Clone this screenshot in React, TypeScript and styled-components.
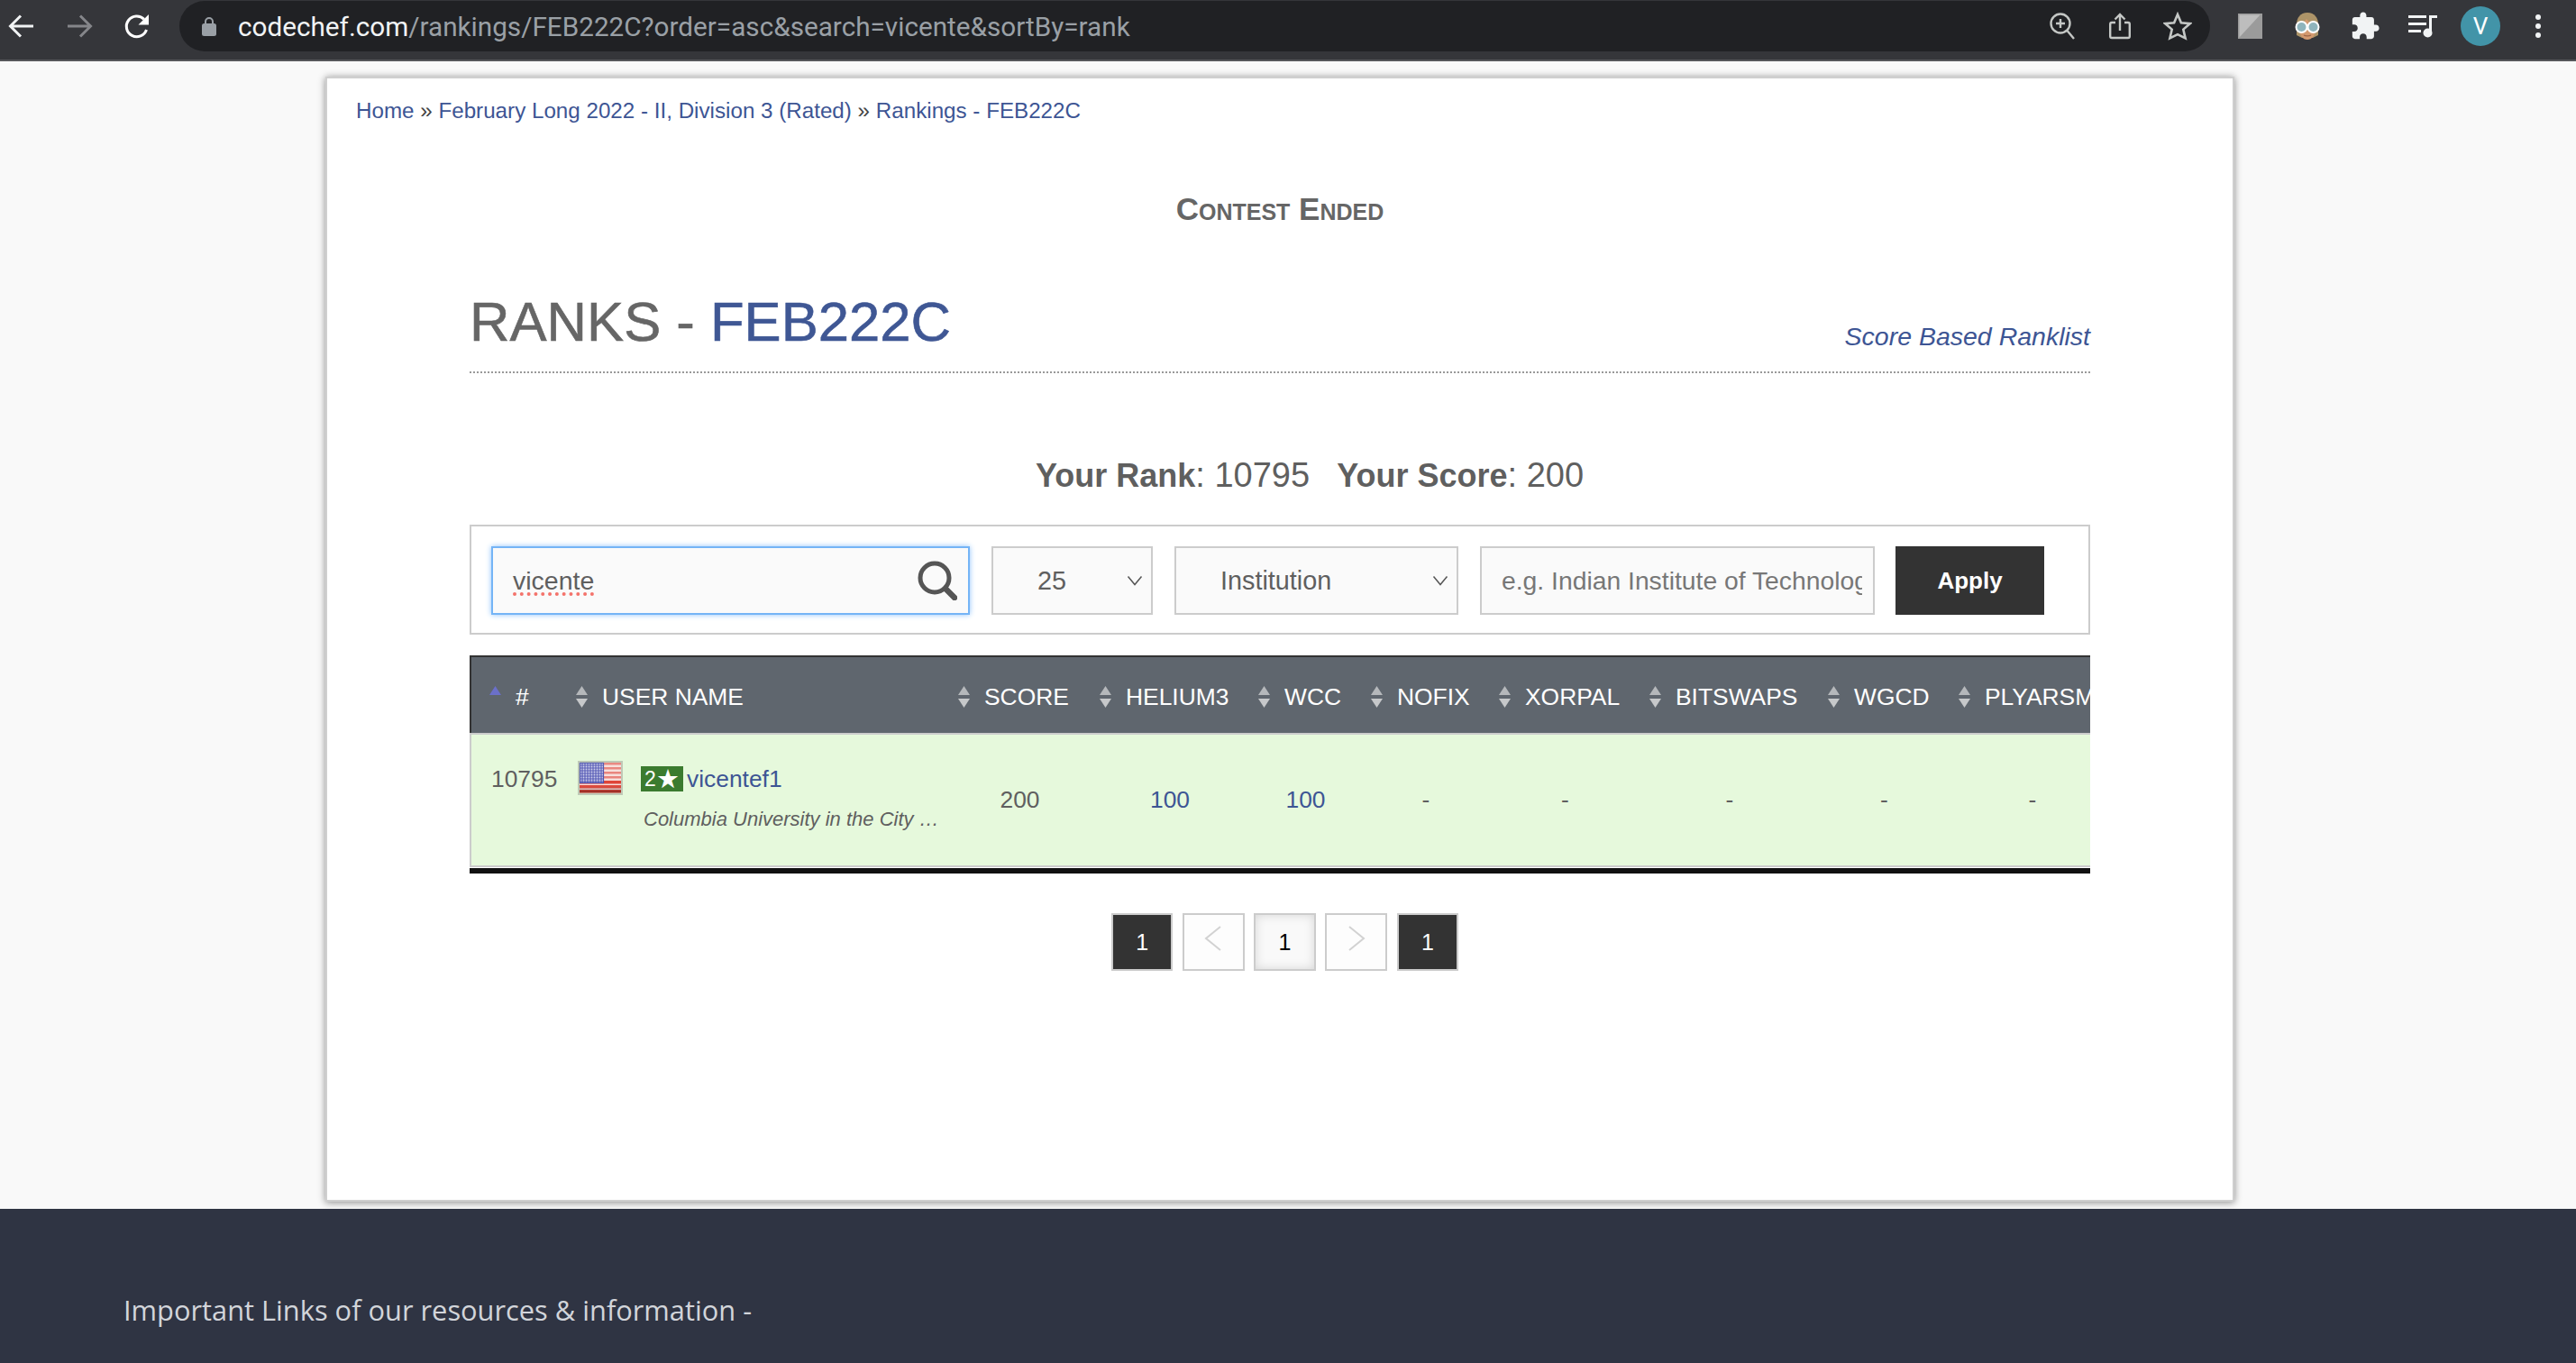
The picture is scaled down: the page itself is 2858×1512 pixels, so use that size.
import * as React from 'react';
import styled, { createGlobalStyle } from 'styled-components';

const GlobalStyle = createGlobalStyle`
  html, body {
    margin: 0;
    padding: 0;
    height: 100%;
    overflow: hidden;
    background: #f9f9f9;
  }
  * {
    box-sizing: border-box;
  }
`;

const sans = `"Liberation Sans", Arial, sans-serif`;
const linkBlue = '#3d5594';
const textGrey = '#5f5f5f';

const columnTemplate = '112px 424px 157px 176px 125px 142px 167px 198px 145px 184px';

const Page = styled.div`
  display: flex;
  flex-direction: column;
  width: 2858px;
  height: 1512px;
  overflow: hidden;
  font-family: ${sans};
`;

/* browser toolbar */
const Toolbar = styled.div`
  display: flex;
  align-items: center;
  flex: none;
  height: 68px;
  padding: 2px 20px 10px 6px;
  background: #35363a;
  border-bottom: 2px solid #55565a;
`;

const ToolButton = styled.div`
  display: flex;
  align-items: center;
  justify-content: center;
  flex: none;
  width: 36px;
  height: 36px;
`;

const NavGroup = styled.div`
  display: flex;
  gap: 28px;
  margin-right: 29px;
`;

const Omnibox = styled.div`
  display: flex;
  align-items: center;
  flex: 1;
  height: 56px;
  padding: 0 18px 0 25px;
  border-radius: 28px;
  background: #202124;
`;

const Url = styled.div`
  flex: 1;
  margin-left: 24px;
  font-family: Roboto, ${sans};
  font-size: 29.7px;
  color: #9aa0a6;
  white-space: nowrap;
`;

const Domain = styled.span`
  color: #f1f3f4;
`;

const OmniActions = styled.div`
  display: flex;
  gap: 28px;
`;

const ExtensionGroup = styled.div`
  display: flex;
  gap: 20px;
  margin-left: 22px;
`;

const ExtensionSlot = styled.div`
  display: flex;
  align-items: center;
  justify-content: center;
  width: 44px;
  height: 44px;
`;

const ProfileBadge = styled(ExtensionSlot)`
  border-radius: 50%;
  background: #4294a8;
  color: #fff;
  font-family: Roboto, ${sans};
  font-size: 26px;
`;

/* page body */
const Main = styled.div`
  display: flex;
  justify-content: center;
  flex: none;
  height: 1273px;
  padding: 17px 18px 0 0;
  background: #f9f9f9;
`;

const Card = styled.div`
  width: 2118px;
  height: 1248px;
  padding: 20px 32px 0;
  background: #fff;
  border: 2px solid #cfcfcf;
  box-shadow: 0 1px 8px rgba(0, 0, 0, 0.45);
`;

const Breadcrumb = styled.div`
  font-size: 24.2px;
  line-height: 31px;
  color: #444;
`;

const Crumb = styled.a`
  color: ${linkBlue};
  text-decoration: none;
`;

const Inner = styled.div`
  width: 1798px;
  margin: 0 auto;
`;

const Notice = styled.div`
  margin-top: 79px;
  font-size: 35px;
  line-height: 30px;
  font-weight: bold;
  font-variant: small-caps;
  text-align: center;
  color: #666;
`;

const TitleRow = styled.div`
  display: flex;
  align-items: flex-end;
  justify-content: space-between;
  height: 96px;
  margin-top: 71px;
  padding-bottom: 15px;
  border-bottom: 2px dotted #999;
`;

const Title = styled.h1`
  margin: 0 0 4px;
  font-size: 61.6px;
  line-height: 72px;
  font-weight: normal;
  color: #666;
  -webkit-text-stroke: 0.6px currentColor;
`;

const TitleCode = styled.span`
  color: #3f5794;
`;

const RanklistLink = styled.a`
  margin-bottom: 7px;
  font-size: 28.5px;
  line-height: 34px;
  font-style: italic;
  color: ${linkBlue};
`;

const Summary = styled.div`
  margin-top: 90px;
  padding-left: 66px;
  font-size: 38px;
  line-height: 46px;
  text-align: center;
  color: ${textGrey};
`;

const SummaryLabel = styled.b`
  margin-left: 30px;
  font-size: 36px;
  &:first-child {
    margin-left: 0;
  }
`;

const FilterBox = styled.div`
  display: flex;
  gap: 24px;
  height: 122px;
  margin-top: 31px;
  padding: 22px;
  border: 2px solid #ccc;
`;

const SearchField = styled.div`
  display: flex;
  align-items: center;
  justify-content: space-between;
  width: 531px;
  height: 76px;
  padding: 0 12px 0 22px;
  background: #fafafa;
  border: 2px solid #74b4f6;
  box-shadow: 0 0 6px #8dc2fb;
  font-size: 28.5px;
  color: ${textGrey};
`;

const Misspelt = styled.span`
  text-decoration: underline dotted #f4736b 4px;
  text-underline-offset: 4px;
`;

const SelectBox = styled.div<{ $width: number }>`
  display: flex;
  align-items: center;
  justify-content: space-between;
  width: ${(p) => p.$width}px;
  height: 76px;
  padding: 0 9px 0 49px;
  background: #fafafa;
  border: 2px solid #ccc;
  font-size: 28.8px;
  color: ${textGrey};
`;

const InstitutionInput = styled.input`
  width: 438px;
  height: 76px;
  padding: 0 12px 0 22px;
  background: #fafafa;
  border: 2px solid #ccc;
  border-radius: 0;
  outline: none;
  font-family: ${sans};
  font-size: 28.3px;
  &::placeholder {
    color: #777;
    opacity: 1;
  }
`;

const ApplyButton = styled.button`
  width: 165px;
  height: 76px;
  margin-left: -1px;
  padding: 0;
  background: #333;
  border: 0;
  font-family: ${sans};
  font-size: 26px;
  font-weight: bold;
  color: #fff;
`;

/* rankings table */
const Table = styled.div`
  margin-top: 23px;
  overflow: hidden;
  border-bottom: 6px solid #111;
`;

const HeaderRow = styled.div`
  display: grid;
  grid-template-columns: ${columnTemplate};
  align-items: center;
  width: 1830px;
  height: 88px;
  background: #5f666e;
  border-top: 2px solid #333;
  border-bottom: 2px solid #ccc;
  box-shadow: inset 2px 0 0 #333;
`;

const HeaderCell = styled.div<{ $first?: boolean }>`
  display: flex;
  align-items: center;
  gap: 16px;
  padding: 4px 0 0 ${(p) => (p.$first ? 22 : 6)}px;
  font-size: 26.4px;
  color: #fff;
  white-space: nowrap;
`;

const BodyRow = styled.div`
  display: grid;
  grid-template-columns: ${columnTemplate};
  align-items: center;
  width: 1830px;
  height: 147px;
  margin-bottom: 1px;
  background: #e6f9dc;
  border-bottom: 2px solid #ccc;
  box-shadow: inset 2px 0 0 #ccc;
  font-size: 26.4px;
  color: ${textGrey};
`;

const RankCell = styled.div`
  align-self: start;
  padding: 34px 0 0 24px;
  line-height: 30px;
`;

const UserCell = styled.div`
  display: flex;
  align-self: start;
  gap: 19px;
  padding: 28px 0 0 7px;
`;

const FlagWrap = styled.div`
  flex: none;
  width: 52px;
  height: 40px;
`;

const UserStack = styled.div`
  padding-top: 6px;
`;

const UserLine = styled.div`
  display: flex;
  align-items: center;
  gap: 4px;
  height: 30px;
`;

const RatingBadge = styled.span`
  display: flex;
  align-items: center;
  justify-content: center;
  width: 47px;
  height: 28px;
  background: #3b7b2f;
  font-size: 23px;
  line-height: 28px;
  color: #fff;
`;

const RatingStar = styled.span`
  font-family: "DejaVu Sans", ${sans};
  font-size: 29px;
  line-height: 28px;
`;

const UserLink = styled.a`
  color: ${linkBlue};
`;

const Institution = styled.div`
  margin-top: 15px;
  margin-left: 3px;
  font-size: 22px;
  line-height: 30px;
  font-style: italic;
  white-space: nowrap;
`;

const ScoreCell = styled.div<{ $link?: boolean }>`
  padding-right: 8px;
  text-align: center;
  color: ${(p) => (p.$link ? linkBlue : textGrey)};
`;

/* pager */
const Pager = styled.div`
  display: flex;
  justify-content: center;
  gap: 10.6px;
  margin-top: 44px;
  padding-left: 11px;
`;

const PageButton = styled.div<{ $kind: 'edge' | 'arrow' | 'current' }>`
  display: flex;
  align-items: center;
  justify-content: center;
  width: 68.6px;
  height: 64px;
  padding-bottom: ${(p) => (p.$kind === 'arrow' ? 8 : 0)}px;
  border: 2px solid #ccc;
  font-size: 25px;
  background: ${(p) => (p.$kind === 'edge' ? '#333' : p.$kind === 'arrow' ? '#fdfdfd' : '#f9f9f9')};
  color: ${(p) => (p.$kind === 'edge' ? '#fff' : '#000')};
  box-shadow: ${(p) => (p.$kind === 'current' ? 'inset 0 0 12px rgba(0, 0, 0, 0.14)' : 'none')};
`;

const Footer = styled.div`
  flex: 1;
  padding: 94px 0 0 137px;
  background: #2f3443;
  font-family: "Open Sans", ${sans};
  font-size: 30.8px;
  line-height: 36px;
  color: #d2d5da;
`;

const BackIcon = ({ color }: { color: string }) => (
  <svg width="30" height="30" viewBox="0 0 30 30" fill="none" stroke={color} strokeWidth="3">
    <path d="M28 15H3M14 3.5 2.5 15 14 26.5" />
  </svg>
);

const ForwardIcon = () => (
  <svg width="30" height="30" viewBox="0 0 30 30" fill="none" stroke="#85868a" strokeWidth="3">
    <path d="M2 15h25M16 3.5 27.5 15 16 26.5" />
  </svg>
);

const ReloadIcon = () => (
  <svg width="30" height="30" viewBox="0 0 30 30">
    <path d="M25.5 19a11.4 11.4 0 1 1-2.6-11.6" fill="none" stroke="#fff" strokeWidth="3" />
    <path d="M28 2v11.5H16.5z" fill="#fff" />
  </svg>
);

const LockIcon = () => (
  <svg width="16" height="22" viewBox="0 0 16 22">
    <path d="M4 9V6a4 4 0 0 1 8 0v3" fill="none" stroke="#9aa0a6" strokeWidth="2" />
    <rect y="8" width="16" height="14" rx="2.5" fill="#9aa0a6" />
  </svg>
);

const ZoomIcon = () => (
  <svg width="28" height="30" viewBox="0 0 28 30" fill="none" stroke="#c4c7c5" strokeWidth="2.4">
    <circle cx="12" cy="12" r="10.5" />
    <path d="M12 7v10M7 12h10M19.5 20 27 29" />
  </svg>
);

const ShareIcon = () => (
  <svg width="24" height="30" viewBox="0 0 24 30" fill="none" stroke="#c4c7c5" strokeWidth="2.4">
    <path d="M7 11H3a1.8 1.8 0 0 0-1.8 1.8v13.4A1.8 1.8 0 0 0 3 28h18a1.8 1.8 0 0 0 1.8-1.8V12.800A1.8 1.8 0 0 0 21 11h-4" />
    <path d="M12 20V2M6.500 7.500 12 2l5.500 5.500" />
  </svg>
);

const StarIcon = () => (
  <svg width="32" height="32" viewBox="0 0 32 32" fill="none" stroke="#c4c7c5" strokeWidth="2.6">
    <path d="m16 3 3.900 9.300 10 .8-7.600 6.500 2.300 9.800L16 25.200 7.400 29.400l2.300-9.800L2.100 13.100l10-.8z" />
  </svg>
);

const GreySquareIcon = () => (
  <svg width="27" height="28" viewBox="0 0 27 28">
    <rect width="27" height="28" fill="#9b9b9b" />
    <path d="M1.500 26.500V1.500h23z" fill="#bdbdbd" />
  </svg>
);

const AvatarIcon = () => (
  <svg width="32" height="32" viewBox="0 0 32 32">
    <path d="M16 1C8 1 4 7 4 14v12l6 3h12l6-3V14c0-7-4-13-12-13z" fill="#ad9468" />
    <path d="M7 15c3-2 6-4 8-7 3 4 6 6 10 7v5c0 6-4 11-9 11S7 26 7 20z" fill="#d3996f" />
    <path d="M12 26c2 1.200 6 1.200 8 0" stroke="#9d6648" strokeWidth="1.400" fill="none" />
    <circle cx="9.500" cy="17" r="6" fill="#8fb4bc" stroke="#fff" strokeWidth="2" />
    <circle cx="22.500" cy="17" r="6" fill="#8fb4bc" stroke="#fff" strokeWidth="2" />
  </svg>
);

const PuzzleIcon = () => (
  <svg width="34" height="34" viewBox="0 0 24 24" fill="#f1f3f4">
    <path d="M20.500 11H19V7c0-1.100-.9-2-2-2h-4V3.500C13 2.120 11.880 1 10.500 1S8 2.120 8 3.500V5H4c-1.100 0-1.990.9-1.990 2v3.800H3.500c1.490 0 2.700 1.210 2.700 2.700s-1.210 2.700-2.700 2.700H2V20c0 1.100.9 2 2 2h3.800v-1.500c0-1.490 1.210-2.700 2.700-2.700 1.490 0 2.700 1.210 2.700 2.700V22H17c1.100 0 2-.9 2-2v-4h1.500c1.380 0 2.500-1.120 2.500-2.500S21.880 11 20.500 11z" />
  </svg>
);

const PlaylistIcon = () => (
  <svg width="32" height="26" viewBox="0 0 32 26" fill="#f1f3f4">
    <rect y="1" width="20" height="3" />
    <rect y="9" width="20" height="3" />
    <rect y="17" width="14" height="3" />
    <rect x="23" y="1" width="3" height="19" />
    <rect x="23" y="1" width="9" height="3" />
    <circle cx="21.500" cy="20.500" r="5" />
  </svg>
);

const MenuIcon = () => (
  <svg width="8" height="28" viewBox="0 0 8 28" fill="#f1f3f4">
    <circle cx="4" cy="4" r="3" />
    <circle cx="4" cy="14" r="3" />
    <circle cx="4" cy="24" r="3" />
  </svg>
);

const SearchIcon = () => (
  <svg width="44" height="44" viewBox="0 0 44 44" fill="none" stroke="#555">
    <circle cx="19" cy="19" r="16" strokeWidth="5" />
    <path d="m31 31 10 10" strokeWidth="6.500" strokeLinecap="round" />
  </svg>
);

const Chevron = () => (
  <svg width="18" height="12" viewBox="0 0 18 12" fill="none" stroke="#555" strokeWidth="1.500">
    <path d="m1.500 1.500 7.500 9 7.500-9" />
  </svg>
);

const ArrowSvg = styled.svg`
  flex: none;
`;

const SortArrows = ({ active }: { active?: boolean }) => (
  <ArrowSvg width="13" height="24" viewBox="0 0 13 24">
    <path d="M6.500 0 13 10H0z" fill={active ? '#6b70c9' : '#b5b8bb'} />
    {!active && <path d="M6.500 24 0 14h13z" fill="#c6c8ca" />}
  </ArrowSvg>
);

const UsFlag = () => (
  <svg width="52" height="40" viewBox="0 0 52 40">
    <defs>
      <pattern id="stars" width="3" height="3" patternUnits="userSpaceOnUse">
        <rect width="3" height="3" fill="#5b60b8" />
        <circle cx="1.500" cy="1.500" r="0.900" fill="#c9cbe9" />
      </pattern>
      <linearGradient id="sheen" x1="0" y1="0" x2="0" y2="1">
        <stop offset="0" stopColor="#fff" stopOpacity="0.12" />
        <stop offset="0.75" stopColor="#fff" stopOpacity="0.05" />
        <stop offset="1" stopColor="#000" stopOpacity="0.35" />
      </linearGradient>
    </defs>
    <rect x="1" y="1" width="50" height="38" fill="#bfcab7" />
    <rect x="3" y="3" width="46" height="33" fill="#f6dcd8" />
    {[3, 8, 13, 18, 23, 28, 33].map((y) => (
      <rect key={y} x="3" y={y} width="46" height={y > 20 ? 3.5 : 2.5} fill={y > 20 ? '#dd3a2c' : '#e77a72'} />
    ))}
    <rect x="3.500" y="3.500" width="26" height="22" fill="url(#stars)" stroke="#4046a8" strokeWidth="1.200" />
    <rect x="3" y="3" width="46" height="33" fill="url(#sheen)" />
  </svg>
);

const PagerArrow = ({ flip }: { flip?: boolean }) => (
  <svg width="20" height="28" viewBox="0 0 20 28" fill="none" stroke="#d2d2d2" strokeWidth="2">
    <path d={flip ? 'M2 1l16 13L2 27' : 'M18 1 2 14l16 13'} />
  </svg>
);

const columns = ['USER NAME', 'SCORE', 'HELIUM3', 'WCC', 'NOFIX', 'XORPAL', 'BITSWAPS', 'WGCD', 'PLYARSM'];
const problemScores = ['100', '100', '-', '-', '-', '-', '-'];

export default function App() {
  return (
    <Page>
      <GlobalStyle />
      <Toolbar>
        <NavGroup>
          <ToolButton><BackIcon color="#f1f3f4" /></ToolButton>
          <ToolButton><ForwardIcon /></ToolButton>
          <ToolButton><ReloadIcon /></ToolButton>
        </NavGroup>
        <Omnibox>
          <LockIcon />
          <Url>
            <Domain>codechef.com</Domain>/rankings/FEB222C?order=asc&amp;search=vicente&amp;sortBy=rank
          </Url>
          <OmniActions>
            <ToolButton><ZoomIcon /></ToolButton>
            <ToolButton><ShareIcon /></ToolButton>
            <ToolButton><StarIcon /></ToolButton>
          </OmniActions>
        </Omnibox>
        <ExtensionGroup>
          <ExtensionSlot><GreySquareIcon /></ExtensionSlot>
          <ExtensionSlot><AvatarIcon /></ExtensionSlot>
          <ExtensionSlot><PuzzleIcon /></ExtensionSlot>
          <ExtensionSlot><PlaylistIcon /></ExtensionSlot>
          <ProfileBadge>V</ProfileBadge>
          <ExtensionSlot><MenuIcon /></ExtensionSlot>
        </ExtensionGroup>
      </Toolbar>
      <Main>
        <Card>
          <Breadcrumb>
            <Crumb>Home</Crumb> » <Crumb>February Long 2022 - II, Division 3 (Rated)</Crumb> » <Crumb>Rankings - FEB222C</Crumb>
          </Breadcrumb>
          <Inner>
            <Notice>Contest Ended</Notice>
            <TitleRow>
              <Title>
                RANKS - <TitleCode>FEB222C</TitleCode>
              </Title>
              <RanklistLink>Score Based Ranklist</RanklistLink>
            </TitleRow>
            <Summary>
              <SummaryLabel>Your Rank</SummaryLabel>: 10795
              <SummaryLabel>Your Score</SummaryLabel>: 200
            </Summary>
            <FilterBox>
              <SearchField>
                <Misspelt>vicente</Misspelt>
                <SearchIcon />
              </SearchField>
              <SelectBox $width={179}>
                25
                <Chevron />
              </SelectBox>
              <SelectBox $width={315}>
                Institution
                <Chevron />
              </SelectBox>
              <InstitutionInput readOnly placeholder="e.g. Indian Institute of Technology" />
              <ApplyButton>Apply</ApplyButton>
            </FilterBox>
            <Table>
              <HeaderRow>
                <HeaderCell $first>
                  <SortArrows active />#
                </HeaderCell>
                {columns.map((name) => (
                  <HeaderCell key={name}>
                    <SortArrows />
                    {name}
                  </HeaderCell>
                ))}
              </HeaderRow>
              <BodyRow>
                <RankCell>10795</RankCell>
                <UserCell>
                  <FlagWrap><UsFlag /></FlagWrap>
                  <UserStack>
                    <UserLine>
                      <RatingBadge>2<RatingStar>★</RatingStar></RatingBadge>
                      <UserLink>vicentef1</UserLink>
                    </UserLine>
                    <Institution>Columbia University in the City …</Institution>
                  </UserStack>
                </UserCell>
                <ScoreCell>200</ScoreCell>
                {problemScores.map((score, i) => (
                  <ScoreCell key={i} $link={score !== '-'}>{score}</ScoreCell>
                ))}
              </BodyRow>
            </Table>
            <Pager>
              <PageButton $kind="edge">1</PageButton>
              <PageButton $kind="arrow"><PagerArrow /></PageButton>
              <PageButton $kind="current">1</PageButton>
              <PageButton $kind="arrow"><PagerArrow flip /></PageButton>
              <PageButton $kind="edge">1</PageButton>
            </Pager>
          </Inner>
        </Card>
      </Main>
      <Footer>Important Links of our resources &amp; information -</Footer>
    </Page>
  );
}
